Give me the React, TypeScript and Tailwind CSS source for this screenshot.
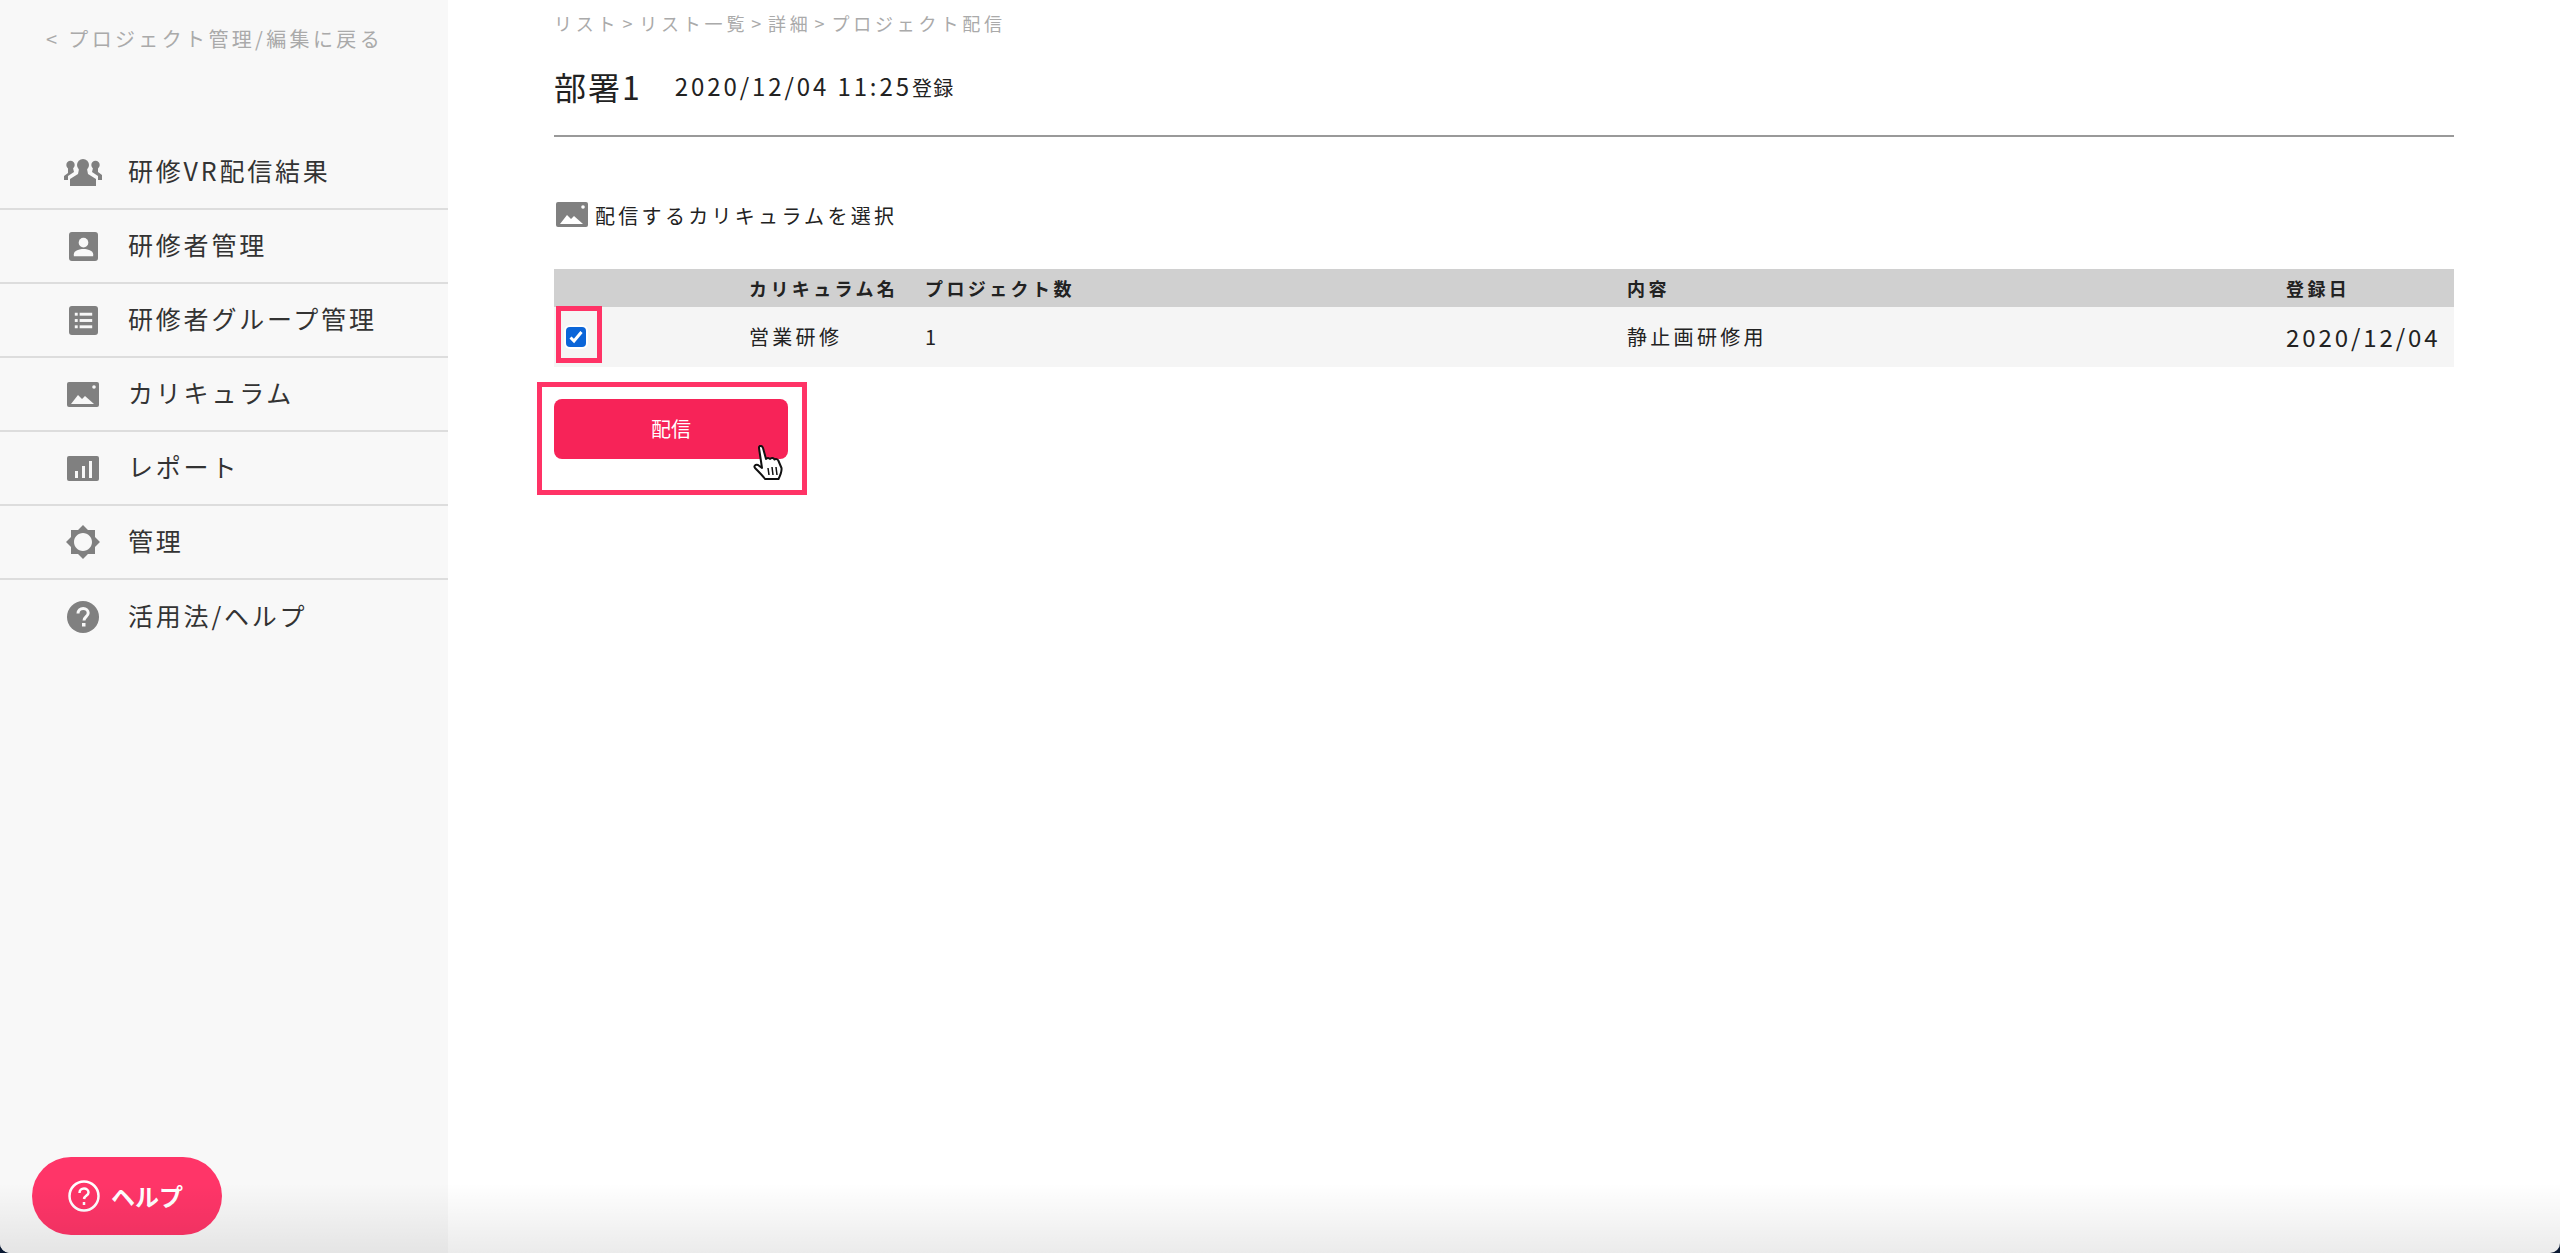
import React from "react";

// Icons
function PeopleIcon() {
  return (
    <svg width="38" height="28" viewBox="0 0 38 28" fill="#808080">
      <circle cx="19" cy="7" r="6" />
      <path d="M15 11h8l1 5 8 5v7H6v-7l8-5z" />
      <circle cx="6.500" cy="7" r="4.200" />
      <path d="M4 10h5l1 4-6 4v4H0v-4l4-3z" />
      <circle cx="31.500" cy="7" r="4.200" />
      <path d="M29 10h5v4l4 3v5h-4v-4l-6-4z" />
    </svg>
  );
}

function AccountIcon() {
  return (
    <svg width="29" height="29" viewBox="0 0 30 30">
      <rect width="30" height="30" rx="3" fill="#808080" />
      <circle cx="15" cy="11" r="5" fill="#f8f8f8" />
      <path d="M5 25v-2c0-4 6-5.500 10-5.500s10 1.500 10 5.500v2z" fill="#f8f8f8" />
    </svg>
  );
}

function ListIcon() {
  return (
    <svg width="29" height="29" viewBox="0 0 30 30">
      <rect width="30" height="30" rx="3" fill="#808080" />
      <g fill="#f8f8f8">
        <rect x="6" y="7" width="3" height="3" />
        <rect x="11" y="7" width="13" height="3" />
        <rect x="6" y="13.500" width="3" height="3" />
        <rect x="11" y="13.500" width="13" height="3" />
        <rect x="6" y="20" width="3" height="3" />
        <rect x="11" y="20" width="13" height="3" />
      </g>
    </svg>
  );
}

function ImageIcon({ bg = "#f8f8f8" }: { bg?: string }) {
  return (
    <svg width="32" height="25" viewBox="0 0 32 25">
      <rect width="32" height="25" rx="2" fill="#808080" />
      <circle cx="27" cy="5" r="1.800" fill={bg} />
      <path d="M4 22l7-9 4 4 3-3 9 8z" fill={bg} />
    </svg>
  );
}

function ReportIcon() {
  return (
    <svg width="32" height="25" viewBox="0 0 32 25">
      <rect width="32" height="25" rx="2" fill="#808080" />
      <g fill="#f8f8f8">
        <rect x="8" y="15" width="3" height="7" />
        <rect x="15" y="10" width="3" height="12" />
        <rect x="22" y="5" width="3" height="17" />
      </g>
    </svg>
  );
}

function SunIcon() {
  return (
    <svg width="36" height="36" viewBox="0 0 24 24" fill="#808080">
      <path d="M20 15.310L23.310 12 20 8.690V4h-4.690L12 .69 8.690 4H4v4.690L.69 12 4 15.310V20h4.690L12 23.310 15.310 20H20v-4.690zM12 18c-3.310 0-6-2.690-6-6s2.690-6 6-6 6 2.690 6 6-2.690 6-6 6z" />
    </svg>
  );
}

function HelpIcon() {
  return (
    <svg width="32" height="32" viewBox="0 0 32 32">
      <circle cx="16" cy="16" r="16" fill="#808080" />
      <path d="M11 12.500c0-3 2.300-5 5.200-5s5 1.900 5 4.500c0 3.500-4.200 3.700-4.200 7.500" fill="none" stroke="#f8f8f8" strokeWidth="3" />
      <rect x="15" y="22" width="3.500" height="3.500" fill="#f8f8f8" />
    </svg>
  );
}

function HandCursor() {
  return (
    <svg width="32" height="36" viewBox="0 0 32 36" className="absolute left-[199px] top-[46px]">
      <path
        d="M6 3c-.5-2.500 3-3 4 0l3 11c1-1.500 3-1.500 4 0 1-1.500 3.500-1.500 4.500.5 1-1 3.500-.5 4 1.500l3 7c.5 4-1 7-3 11H12c-2-3-6-7-10-11-1.500-2 .5-4 3-3l4 3z"
        fill="#fff"
        stroke="#111"
        strokeWidth="2"
        strokeLinejoin="round"
      />
      <path d="M15 23l1 7M19 22l1 8M23 22l1 8" stroke="#111" strokeWidth="1.500" />
    </svg>
  );
}

const menuItems = [
  { label: "研修VR配信結果", icon: <PeopleIcon /> },
  { label: "研修者管理", icon: <AccountIcon /> },
  { label: "研修者グループ管理", icon: <ListIcon /> },
  { label: "カリキュラム", icon: <ImageIcon /> },
  { label: "レポート", icon: <ReportIcon /> },
  { label: "管理", icon: <SunIcon /> },
  { label: "活用法/ヘルプ", icon: <HelpIcon /> },
];

function Sep() {
  return <span className="px-[3px]">&gt;</span>;
}

export default function App() {
  return (
    <div className="h-[1253px] bg-[#0b1a33] font-['Noto_Sans_CJK_JP','Liberation_Sans',sans-serif]">
      <div className="relative flex h-full overflow-hidden rounded-b-[10px] bg-white text-[#222]">
        {/* Sidebar */}
        <aside className="flex w-[448px] shrink-0 flex-col bg-[#f8f8f8]">
          <a className="mt-[24px] pl-[46px] text-[20px] leading-[30px] tracking-[3.350px] text-[#aaa]">
            &lt; プロジェクト管理/編集に戻る
          </a>
          <nav className="mt-[82px]">
            {menuItems.map((item, i) => (
              <div
                key={item.label}
                className={
                  i < menuItems.length - 1
                    ? "flex h-[74px] items-center border-b-2 border-[#ddd]"
                    : "flex h-[74px] items-center"
                }
              >
                <div className="flex w-[128px] shrink-0 justify-center pl-[42px] pr-[4px]">
                  {item.icon}
                </div>
                <span className="pb-[2px] text-[25px] tracking-[2.800px] text-[#333]">{item.label}</span>
              </div>
            ))}
          </nav>
          <div className="mt-auto mb-[18px] ml-[32px] flex h-[78px] w-[190px] items-center gap-[11px] rounded-full bg-[#ff3568] pl-[36px] text-white">
            <svg width="32" height="32" viewBox="0 0 32 32" fill="none" stroke="#fff" strokeWidth="2.500">
              <circle cx="16" cy="16" r="14.500" />
              <path d="M11.500 13c0-2.800 2-4.500 4.500-4.500s4.500 1.700 4.500 4c0 3-3.800 3-4.500 6.500" />
              <path d="M16 22v3" />
            </svg>
            <span className="text-[24px] font-bold">ヘルプ</span>
          </div>
        </aside>

        {/* Main */}
        <main className="flex-1 pl-[106px] pr-[106px]">
          <p className="mt-[9px] text-[18px] leading-[28px] tracking-[3.800px] text-[#aaa]">
            リスト
            <Sep />
            リスト一覧
            <Sep />
            詳細
            <Sep />
            プロジェクト配信
          </p>
          <div className="mt-[27px] flex h-[73px] items-start border-b-2 border-[#999]">
            <h1 className="text-[32px] leading-[44px] tracking-[2px] text-[#222]">部署1</h1>
            <span className="ml-[33px] mt-[5px] text-[24px] leading-[34px] tracking-[2.900px]">
              2020/12/04 11:25
              <span className="text-[20px] tracking-[1.500px]">登録</span>
            </span>
          </div>

          <div className="mt-[61px] flex items-center gap-[7px] pl-[2px]">
            <ImageIcon bg="#fff" />
            <span className="pt-[3px] text-[20px] leading-[30px] tracking-[3.300px]">配信するカリキュラムを選択</span>
          </div>

          <div className="mt-[38px]">
            <div className="grid h-[38px] grid-cols-[195px_176px_702px_659px_1fr] items-center bg-[#d0d0d0] text-[18px] font-bold tracking-[3.400px]">
              <span />
              <span>カリキュラム名</span>
              <span>プロジェクト数</span>
              <span>内容</span>
              <span>登録日</span>
            </div>
            <div className="relative grid h-[60px] grid-cols-[195px_176px_702px_659px_1fr] items-center bg-[#f5f5f5] text-[20px] tracking-[3.300px]">
              <span className="pl-[12px]">
                <span className="flex size-[20px] items-center justify-center rounded-[4px] bg-[#0b65d8] ring-2 ring-white">
                  <svg width="14" height="14" viewBox="0 0 14 14" fill="none" stroke="#fff" strokeWidth="3">
                    <path d="M1.500 7.500l3.500 3.500 7.500-9" />
                  </svg>
                </span>
              </span>
              <span>営業研修</span>
              <span>1</span>
              <span>静止画研修用</span>
              <span className="text-[24px] tracking-[2.900px]">2020/12/04</span>
              <div className="pointer-events-none absolute left-[2px] top-[-1px] h-[57px] w-[46px] border-[5px] border-[#ff3366]" />
            </div>
          </div>

          <div className="relative mt-[32px]">
            <button className="h-[60px] w-[234px] rounded-[8px] bg-[#f72358] text-[20px] text-white">配信</button>
            <div className="pointer-events-none absolute left-[-17px] top-[-17px] h-[113px] w-[270px] border-[5px] border-[#ff3366]" />
            <HandCursor />
          </div>
        </main>

        {/* Window bottom shading */}
        <div className="pointer-events-none absolute inset-x-0 bottom-0 h-[70px] bg-gradient-to-t from-[#00000014] to-transparent" />
      </div>
    </div>
  );
}
